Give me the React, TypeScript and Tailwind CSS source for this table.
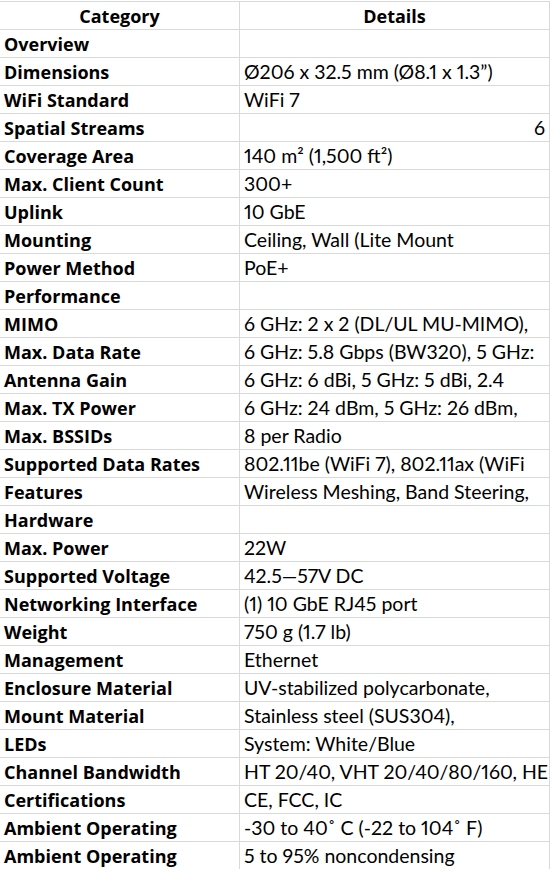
const rows: [string, string, boolean?][] = [
  ["Overview", ""],
  ["Dimensions", "Ø206 x 32.5 mm (Ø8.1 x 1.3”)"],
  ["WiFi Standard", "WiFi 7"],
  ["Spatial Streams", "6", true],
  ["Coverage Area", "140 m² (1,500 ft²)"],
  ["Max. Client Count", "300+"],
  ["Uplink", "10 GbE"],
  ["Mounting", "Ceiling, Wall (Lite Mount"],
  ["Power Method", "PoE+"],
  ["Performance", ""],
  ["MIMO", "6 GHz: 2 x 2 (DL/UL MU-MIMO),"],
  ["Max. Data Rate", "6 GHz: 5.8 Gbps (BW320), 5 GHz:"],
  ["Antenna Gain", "6 GHz: 6 dBi, 5 GHz: 5 dBi, 2.4"],
  ["Max. TX Power", "6 GHz: 24 dBm, 5 GHz: 26 dBm,"],
  ["Max. BSSIDs", "8 per Radio"],
  ["Supported Data Rates", "802.11be (WiFi 7), 802.11ax (WiFi"],
  ["Features", "Wireless Meshing, Band Steering,"],
  ["Hardware", ""],
  ["Max. Power", "22W"],
  ["Supported Voltage", "42.5—57V DC"],
  ["Networking Interface", "(1) 10 GbE RJ45 port"],
  ["Weight", "750 g (1.7 lb)"],
  ["Management", "Ethernet"],
  ["Enclosure Material", "UV-stabilized polycarbonate,"],
  ["Mount Material", "Stainless steel (SUS304),"],
  ["LEDs", "System: White/Blue"],
  ["Channel Bandwidth", "HT 20/40, VHT 20/40/80/160, HE"],
  ["Certifications", "CE, FCC, IC"],
  ["Ambient Operating", "-30 to 40˚ C (-22 to 104˚ F)"],
  ["Ambient Operating", "5 to 95% noncondensing"],
];

const bold = "font-['Open_Sans',sans-serif] font-bold text-[18px]";

export default function App() {
  return (
    <div className="w-[550px] h-[869px] overflow-hidden bg-white text-black font-['Lato',sans-serif] text-[19.5px] leading-none proportional-nums">
      <div className="grid grid-cols-[240px_310px] border-t border-[#d9d9d9] mt-px">
        <div className={`h-[28px] border-b border-r border-[#d9d9d9] flex items-center justify-center pt-px ${bold}`}>
          Category
        </div>
        <div className={`h-[28px] border-b border-r border-[#d9d9d9] flex items-center justify-center pt-px ${bold}`}>
          Details
        </div>
        {rows.map(([k, v, num], i) => (
          <div key={i} className="contents">
            <div className={`h-[28px] border-b border-r border-[#d9d9d9] flex items-center pl-[4px] pt-px whitespace-nowrap overflow-hidden ${bold}`}>
              {k}
            </div>
            <div
              className={`h-[28px] border-b border-r border-[#d9d9d9] flex items-center pt-px whitespace-nowrap overflow-hidden ${
                num ? "justify-end pr-[4px]" : "pl-[4px]"
              }`}
            >
              {v}
            </div>
          </div>
        ))}
      </div>
    </div>
  );
}
